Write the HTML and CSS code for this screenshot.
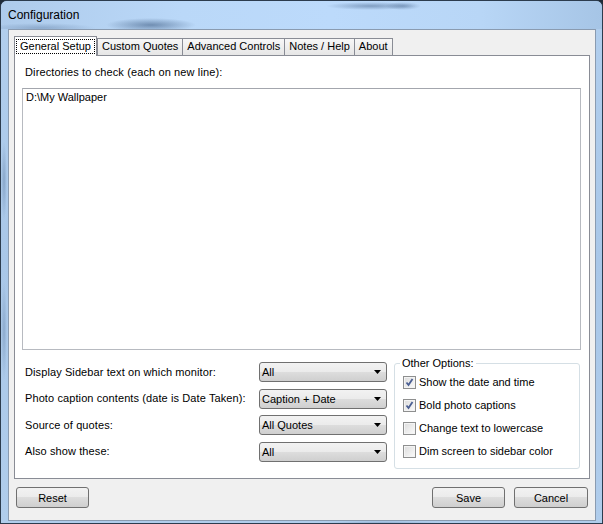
FILE: index.html
```html
<!DOCTYPE html>
<html>
<head>
<meta charset="utf-8">
<title>Configuration</title>
<link rel="stylesheet" href="styles.css">
</head>
<body>
<div class="window">
  <div class="titlebar">Configuration</div>
  <div class="frame">
    <div class="client">
      <div class="tabs">
        <div class="tab active"><span class="focus">General Setup</span></div>
        <div class="tab">Custom Quotes</div>
        <div class="tab">Advanced Controls</div>
        <div class="tab">Notes / Help</div>
        <div class="tab">About</div>
      </div>
      <div class="pane">
        <div class="dir-label">Directories to check (each on new line):</div>
        <div class="textbox">D:\My Wallpaper</div>
        <div class="lower">
          <div class="fields">
            <span class="flabel">Display Sidebar text on which monitor:</span>
            <div class="combo"><span>All</span><svg class="arrow" width="7" height="4" viewBox="0 0 7 4"><path d="M0 0h7L3.5 4z" fill="#000"/></svg></div>
            <span class="flabel">Photo caption contents (date is Date Taken):</span>
            <div class="combo"><span>Caption + Date</span><svg class="arrow" width="7" height="4" viewBox="0 0 7 4"><path d="M0 0h7L3.5 4z" fill="#000"/></svg></div>
            <span class="flabel">Source of quotes:</span>
            <div class="combo"><span>All Quotes</span><svg class="arrow" width="7" height="4" viewBox="0 0 7 4"><path d="M0 0h7L3.5 4z" fill="#000"/></svg></div>
            <span class="flabel">Also show these:</span>
            <div class="combo"><span>All</span><svg class="arrow" width="7" height="4" viewBox="0 0 7 4"><path d="M0 0h7L3.5 4z" fill="#000"/></svg></div>
          </div>
          <fieldset class="group">
            <legend>Other Options:</legend>
            <label class="opt"><span class="box"><svg width="11" height="11" viewBox="0 0 11 11"><path d="M2.5 5.5l2 2.5 4-6" fill="none" stroke="#4b5f93" stroke-width="1.8"/></svg></span>Show the date and time</label>
            <label class="opt"><span class="box"><svg width="11" height="11" viewBox="0 0 11 11"><path d="M2.5 5.5l2 2.5 4-6" fill="none" stroke="#4b5f93" stroke-width="1.8"/></svg></span>Bold photo captions</label>
            <label class="opt"><span class="box"></span>Change text to lowercase</label>
            <label class="opt"><span class="box"></span>Dim screen to sidebar color</label>
          </fieldset>
        </div>
      </div>
      <div class="buttons">
        <button class="btn btn-reset">Reset</button>
        <span class="spacer"></span>
        <button class="btn">Save</button>
        <button class="btn btn-cancel">Cancel</button>
      </div>
    </div>
  </div>
</div>
</body>
</html>
```

FILE: styles.css
```css
html, body {
  margin: 0;
  padding: 0;
  background: #1f2b38;
}
body {
  width: 603px;
  height: 524px;
  overflow: hidden;
  font-family: "Liberation Sans", Arial, sans-serif;
  font-size: 11px;
  color: #000;
}
.window {
  box-sizing: border-box;
  width: 603px;
  height: 524px;
  border: 1px solid #2c3c4e;
  border-radius: 7px 7px 0 0;
  background:
    radial-gradient(ellipse 3px 40px at 3px 180px, rgba(70,100,140,0.35), rgba(70,100,140,0)),
    radial-gradient(ellipse 3px 50px at 3px 330px, rgba(70,100,140,0.3), rgba(70,100,140,0)),
    radial-gradient(ellipse 60px 2px at 380px 522px, rgba(70,100,140,0.3), rgba(70,100,140,0)),
    linear-gradient(to bottom, #b2cfee 0, #a9c7e8 50%, #b0cdec 100%);
  display: flex;
  flex-direction: column;
  overflow: hidden;
}
.titlebar {
  height: 28px;
  line-height: 29px;
  padding-left: 7px;
  font-size: 12px;
  background:
    radial-gradient(ellipse 45px 7px at 150px 24px, rgba(40,70,110,0.5), rgba(40,70,110,0)),
    radial-gradient(ellipse 55px 5px at 40px 27px, rgba(60,90,130,0.3), rgba(60,90,130,0)),
    radial-gradient(ellipse 45px 4px at 370px 5px, rgba(40,70,110,0.4), rgba(40,70,110,0)),
    radial-gradient(ellipse 18px 4px at 402px 5px, rgba(40,70,110,0.35), rgba(40,70,110,0)),
    linear-gradient(to right, #aecbeb 0, #bad8f8 30%, #bcdafb 55%, #b8d6f6 80%, #a6c5e6 100%);
}
.frame {
  flex: 1;
  padding: 0 6px 2px 7px;
  display: flex;
}
.client {
  flex: 1;
  border: 1px solid #8a9bb0;
  background: #f0f0f0;
  padding: 6px 5px 0 5px;
  display: flex;
  flex-direction: column;
}
.tabs {
  display: flex;
  align-items: flex-end;
  height: 19px;
}
.tab {
  box-sizing: border-box;
  height: 17px;
  line-height: 15px;
  padding: 0 4px;
  border: 1px solid #898c95;
  border-bottom: none;
  background: linear-gradient(#f7f7f7, #e6e6e6);
  margin-left: -1px;
  white-space: nowrap;
}
.tab.active {
  position: relative;
  z-index: 1;
  height: 20px;
  margin-bottom: -1px;
  margin-left: 0;
  margin-right: 1px;
  padding: 2px 1px 0 1px;
  background: #fff;
}
.focus {
  display: inline-block;
  border: 1px dotted #000;
  padding: 0 3px;
  line-height: 13px;
}
.pane {
  box-sizing: border-box;
  height: 424px;
  border: 1px solid #898c95;
  background: #fff;
  padding: 10px 8px 0 7px;
}
.dir-label {
  padding-left: 3px;
  line-height: 13px;
  letter-spacing: 0.12px;
}
.textbox {
  box-sizing: border-box;
  margin-top: 9px;
  height: 262px;
  border: 1px solid #b7bac0;
  border-top-color: #a3a6ad;
  padding: 2px 3px;
  line-height: 13px;
}
.lower {
  display: flex;
  align-items: flex-start;
  margin-top: 7px;
}
.fields {
  margin-top: 5px;
  padding-left: 3px;
  display: grid;
  grid-template-columns: 234px 128px;
  grid-auto-rows: 20px;
  row-gap: 6.67px;
  align-items: center;
}
.flabel {
  line-height: 13px;
  white-space: nowrap;
  letter-spacing: 0.1px;
}
.combo {
  box-sizing: border-box;
  height: 20px;
  border: 1px solid #707070;
  border-radius: 3px;
  background: linear-gradient(#f2f2f2 0%, #ebebeb 50%, #dddddd 50%, #cfcfcf 100%);
  display: flex;
  align-items: center;
  justify-content: space-between;
  padding: 0 5px 0 2px;
  font-family: "Liberation Sans", Arial, sans-serif;
}
.arrow {
  display: block;
}
.group {
  box-sizing: border-box;
  margin: 0 0 0 7px;
  width: 186px;
  border: 1px solid #d5dfe5;
  border-radius: 3px;
  padding: 6px 0 10px 8px;
  display: flex;
  flex-direction: column;
  gap: 10px;
}
.group legend {
  padding: 0 2px;
  margin-left: -3px;
  line-height: 13px;
}
.opt {
  display: flex;
  align-items: center;
  height: 13px;
  line-height: 13px;
  white-space: nowrap;
}
.box {
  box-sizing: border-box;
  width: 13px;
  height: 13px;
  margin-right: 3px;
  border: 1px solid #8e8f8f;
  background: linear-gradient(135deg, #dcdcdc, #fbfbfb);
  box-shadow: inset 0 0 0 1px #f4f4f4;
  display: flex;
  align-items: center;
  justify-content: center;
}
.buttons {
  display: flex;
  margin-top: 8px;
  padding: 0 2px;
  gap: 9px;
}
.spacer {
  flex: 1;
}
.btn {
  box-sizing: border-box;
  width: 73px;
  height: 21px;
  border: 1px solid #707070;
  border-radius: 3px;
  background: linear-gradient(#f2f2f2 0%, #ebebeb 50%, #dddddd 50%, #cfcfcf 100%);
  font-family: "Liberation Sans", Arial, sans-serif;
  font-size: 11px;
  color: #000;
  padding: 0;
}
.btn-cancel {
  width: 74px;
}
```
